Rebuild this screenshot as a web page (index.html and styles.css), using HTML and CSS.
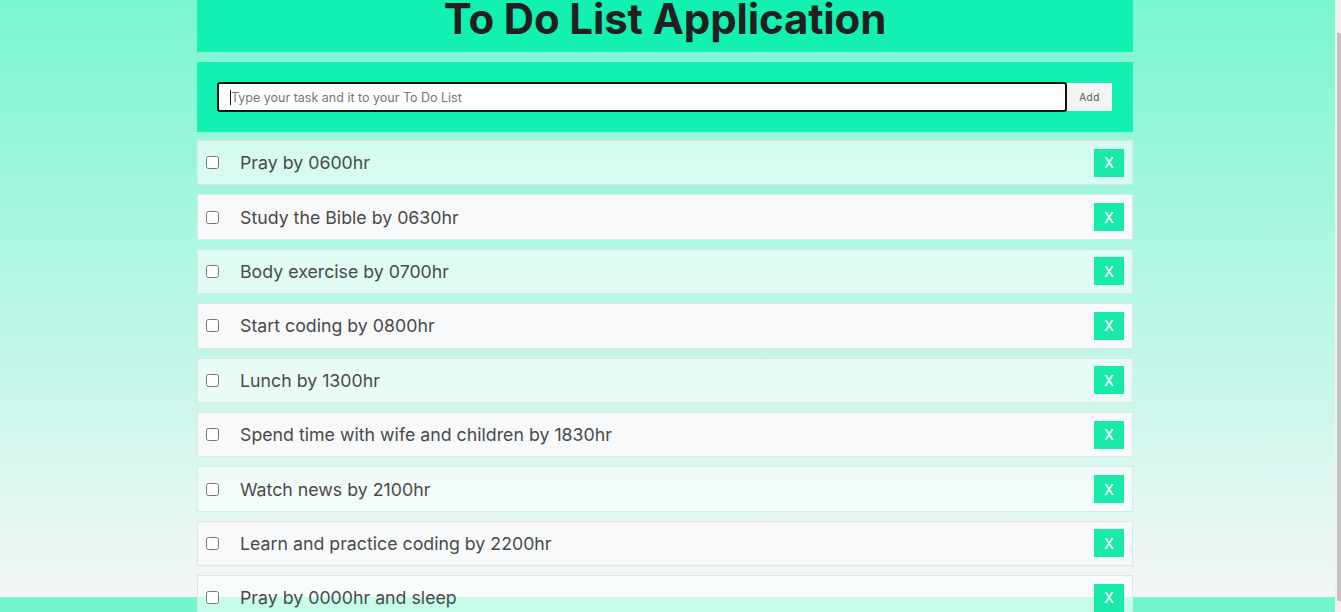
FILE: index.html
```html
<!DOCTYPE html>
<html lang="en">
<head>
<meta charset="utf-8">
<title>To Do List Application</title>
<link rel="stylesheet" href="styles.css">
</head>
<body>
<div class="page">
  <header class="title-bar">
    <h1 class="title">To Do List Application</h1>
  </header>
  <section class="entry">
    <div class="entry-field">
      <input class="entry-input" type="text" placeholder="Type your task and it to your To Do List">
      <span class="caret"></span>
    </div>
    <button class="entry-add">Add</button>
  </section>
  <ul class="tasks">
    <li class="task"><input type="checkbox" class="task-check"><span class="task-text">Pray by 0600hr</span><button class="task-del">X</button></li>
    <li class="task"><input type="checkbox" class="task-check"><span class="task-text">Study the Bible by 0630hr</span><button class="task-del">X</button></li>
    <li class="task"><input type="checkbox" class="task-check"><span class="task-text">Body exercise by 0700hr</span><button class="task-del">X</button></li>
    <li class="task"><input type="checkbox" class="task-check"><span class="task-text">Start coding by 0800hr</span><button class="task-del">X</button></li>
    <li class="task"><input type="checkbox" class="task-check"><span class="task-text">Lunch by 1300hr</span><button class="task-del">X</button></li>
    <li class="task"><input type="checkbox" class="task-check"><span class="task-text">Spend time with wife and children by 1830hr</span><button class="task-del">X</button></li>
    <li class="task"><input type="checkbox" class="task-check"><span class="task-text">Watch news by 2100hr</span><button class="task-del">X</button></li>
    <li class="task"><input type="checkbox" class="task-check"><span class="task-text">Learn and practice coding by 2200hr</span><button class="task-del">X</button></li>
    <li class="task"><input type="checkbox" class="task-check"><span class="task-text">Pray by 0000hr and sleep</span><button class="task-del">X</button></li>
  </ul>
</div>
<div class="scrollbar"><div class="scrollbar-thumb"></div></div>
</body>
</html>
```

FILE: styles.css
```css
html {
  height: 100%;
  overflow: hidden;
  background: linear-gradient(to bottom, #7af6d1 0px, #f4f7f8 597px, #73f5cf 597px, #73f5cf 100%) no-repeat;
}
body {
  margin: 0;
  padding-right: 11px;
  font-family: Inter, "Noto Sans", sans-serif;
}
.page {
  width: 936px;
  margin: 0 auto;
}
.title-bar {
  background: #12f1b2;
  height: 52px;
  overflow: hidden;
  display: flex;
  justify-content: center;
  margin-bottom: 10px;
}
.title {
  margin: -3px 0 0 0;
  font-size: 42px;
  line-height: 44px;
  font-weight: 700;
  color: #231f20;
  letter-spacing: -0.15px;
}
.entry {
  background: #12f1b2;
  height: 70px;
  display: flex;
  align-items: center;
  padding: 0 21px 0 20px;
  box-sizing: border-box;
  margin-bottom: 8px;
}
.entry-field {
  flex: 1;
  position: relative;
  display: flex;
}
.entry-input {
  flex: 1;
  height: 30px;
  box-sizing: border-box;
  border: 2px solid #111;
  border-radius: 3px;
  outline: none;
  padding: 0 12px;
  font-family: Inter, sans-serif;
  font-size: 12.5px;
  color: #333;
  background: #fff;
}
.entry-input::placeholder {
  color: #767676;
}
.caret {
  position: absolute;
  left: 13px;
  top: 8px;
  width: 1px;
  height: 15px;
  background: #111;
}
.entry-add {
  width: 45px;
  height: 28px;
  border: none;
  background: #f4f4f4;
  color: #555;
  font-family: Inter, sans-serif;
  font-size: 10px;
  letter-spacing: 0.5px;
  padding: 0;
}
.tasks {
  list-style: none;
  margin: 0;
  padding: 0;
}
.task {
  height: 45.4px;
  box-sizing: border-box;
  margin-bottom: 9px;
  border: 1px solid #dfe5e4;
  display: flex;
  align-items: center;
  padding: 0 8px 0 8px;
  background: rgba(255, 255, 255, 0.6);
}
.task:nth-child(even) {
  background: #f7f9fa;
}
.task-check {
  width: 13px;
  height: 13px;
  margin: 0;
}
.task-text {
  flex: 1;
  margin-left: 21px;
  font-size: 17.75px;
  color: #4a4a4a;
}
.task-del {
  width: 30px;
  height: 28px;
  border: none;
  padding: 0;
  background: #18eaab;
  color: #fff;
  font-family: Inter, sans-serif;
  font-size: 14px;
  font-weight: 500;
}
.scrollbar {
  position: fixed;
  top: 0;
  right: 0;
  width: 6px;
  height: 612px;
  background: #f1f1f1;
}
.scrollbar-thumb {
  margin: 33px 0 0 2px;
  width: 4px;
  height: 568px;
  background: #c1c1c1;
}
```
